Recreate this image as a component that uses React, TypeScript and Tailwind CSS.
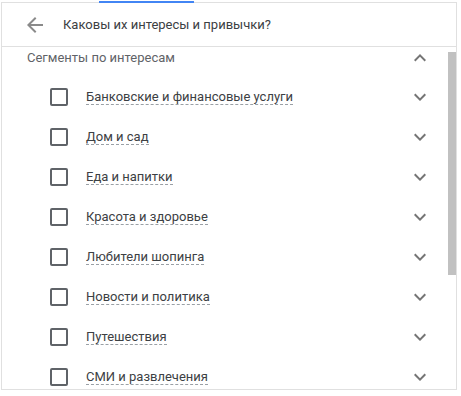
const items = [
  "Банковские и финансовые услуги",
  "Дом и сад",
  "Еда и напитки",
  "Красота и здоровье",
  "Любители шопинга",
  "Новости и политика",
  "Путешествия",
  "СМИ и развлечения",
];

function ExpandMore() {
  return (
    <svg width="24" height="24" viewBox="0 0 24 24" className="fill-[#757575]">
      <path d="M16.59 8.59L12 13.17 7.41 8.59 6 10l6 6 6-6z" />
    </svg>
  );
}

function ExpandLess() {
  return (
    <svg width="24" height="24" viewBox="0 0 24 24" className="fill-[#757575]">
      <path d="M12 8l-6 6 1.41 1.41L12 10.83l4.59 4.58L18 14z" />
    </svg>
  );
}

function ArrowBack() {
  return (
    <svg width="24" height="24" viewBox="0 0 24 24" className="fill-[#8a8a8a]">
      <path d="M20 11H7.83l5.59-5.59L12 4l-8 8 8 8 1.41-1.41L7.83 13H20v-2z" />
    </svg>
  );
}

export default function App() {
  return (
    <div
      className="w-[461px] h-[396px] bg-white pt-[2px] pl-px overflow-hidden"
      style={{ fontFamily: "Roboto, 'Liberation Sans', sans-serif" }}
    >
      <div className="relative w-[456px] h-[388px] border-t border-r border-b border-l border-[#e0e0e0] flex flex-col">
        {/* active tab indicator */}
        <div className="absolute left-[97px] top-[-2px] w-[95px] h-[2px] bg-[#4285f4]" />

        <div className="h-[44px] shrink-0 flex items-center border-b border-[#e0e0e0]">
          <div className="ml-[21px] w-[24px] h-[24px]">
            <ArrowBack />
          </div>
          <span className="ml-[16px] text-[13px] text-[#3c4043]">
            Каковы их интересы и привычки?
          </span>
        </div>

        <div className="flex flex-1 min-h-0">
          <div className="flex-1 min-w-0">
            <div className="h-[24px] mt-[-1px] flex items-center">
              <span className="ml-[25px] text-[13px] text-[#5f6368]">
                Сегменты по интересам
              </span>
              <div className="ml-auto mr-[16px] w-[24px] h-[24px]">
                <ExpandLess />
              </div>
            </div>
            <div className="mt-[7px] flex flex-col">
              {items.map((label) => (
                <div key={label} className="h-[40px] flex items-center">
                  <div className="ml-[48px] w-[18px] h-[18px] rounded-[2px] border-2 border-[#5f6368]" />
                  <span className="ml-[18px] text-[13px] leading-[14px] text-[#3c4043] border-b border-dashed border-[#9aa0a6]">
                    {label}
                  </span>
                  <div className="ml-auto mr-[16px] w-[24px] h-[24px]">
                    <ExpandMore />
                  </div>
                </div>
              ))}
            </div>
          </div>
          <div className="w-[8px] shrink-0 pt-[5px]">
            <div className="h-[223px] bg-[#c1c1c1]" />
          </div>
        </div>
      </div>
    </div>
  );
}
